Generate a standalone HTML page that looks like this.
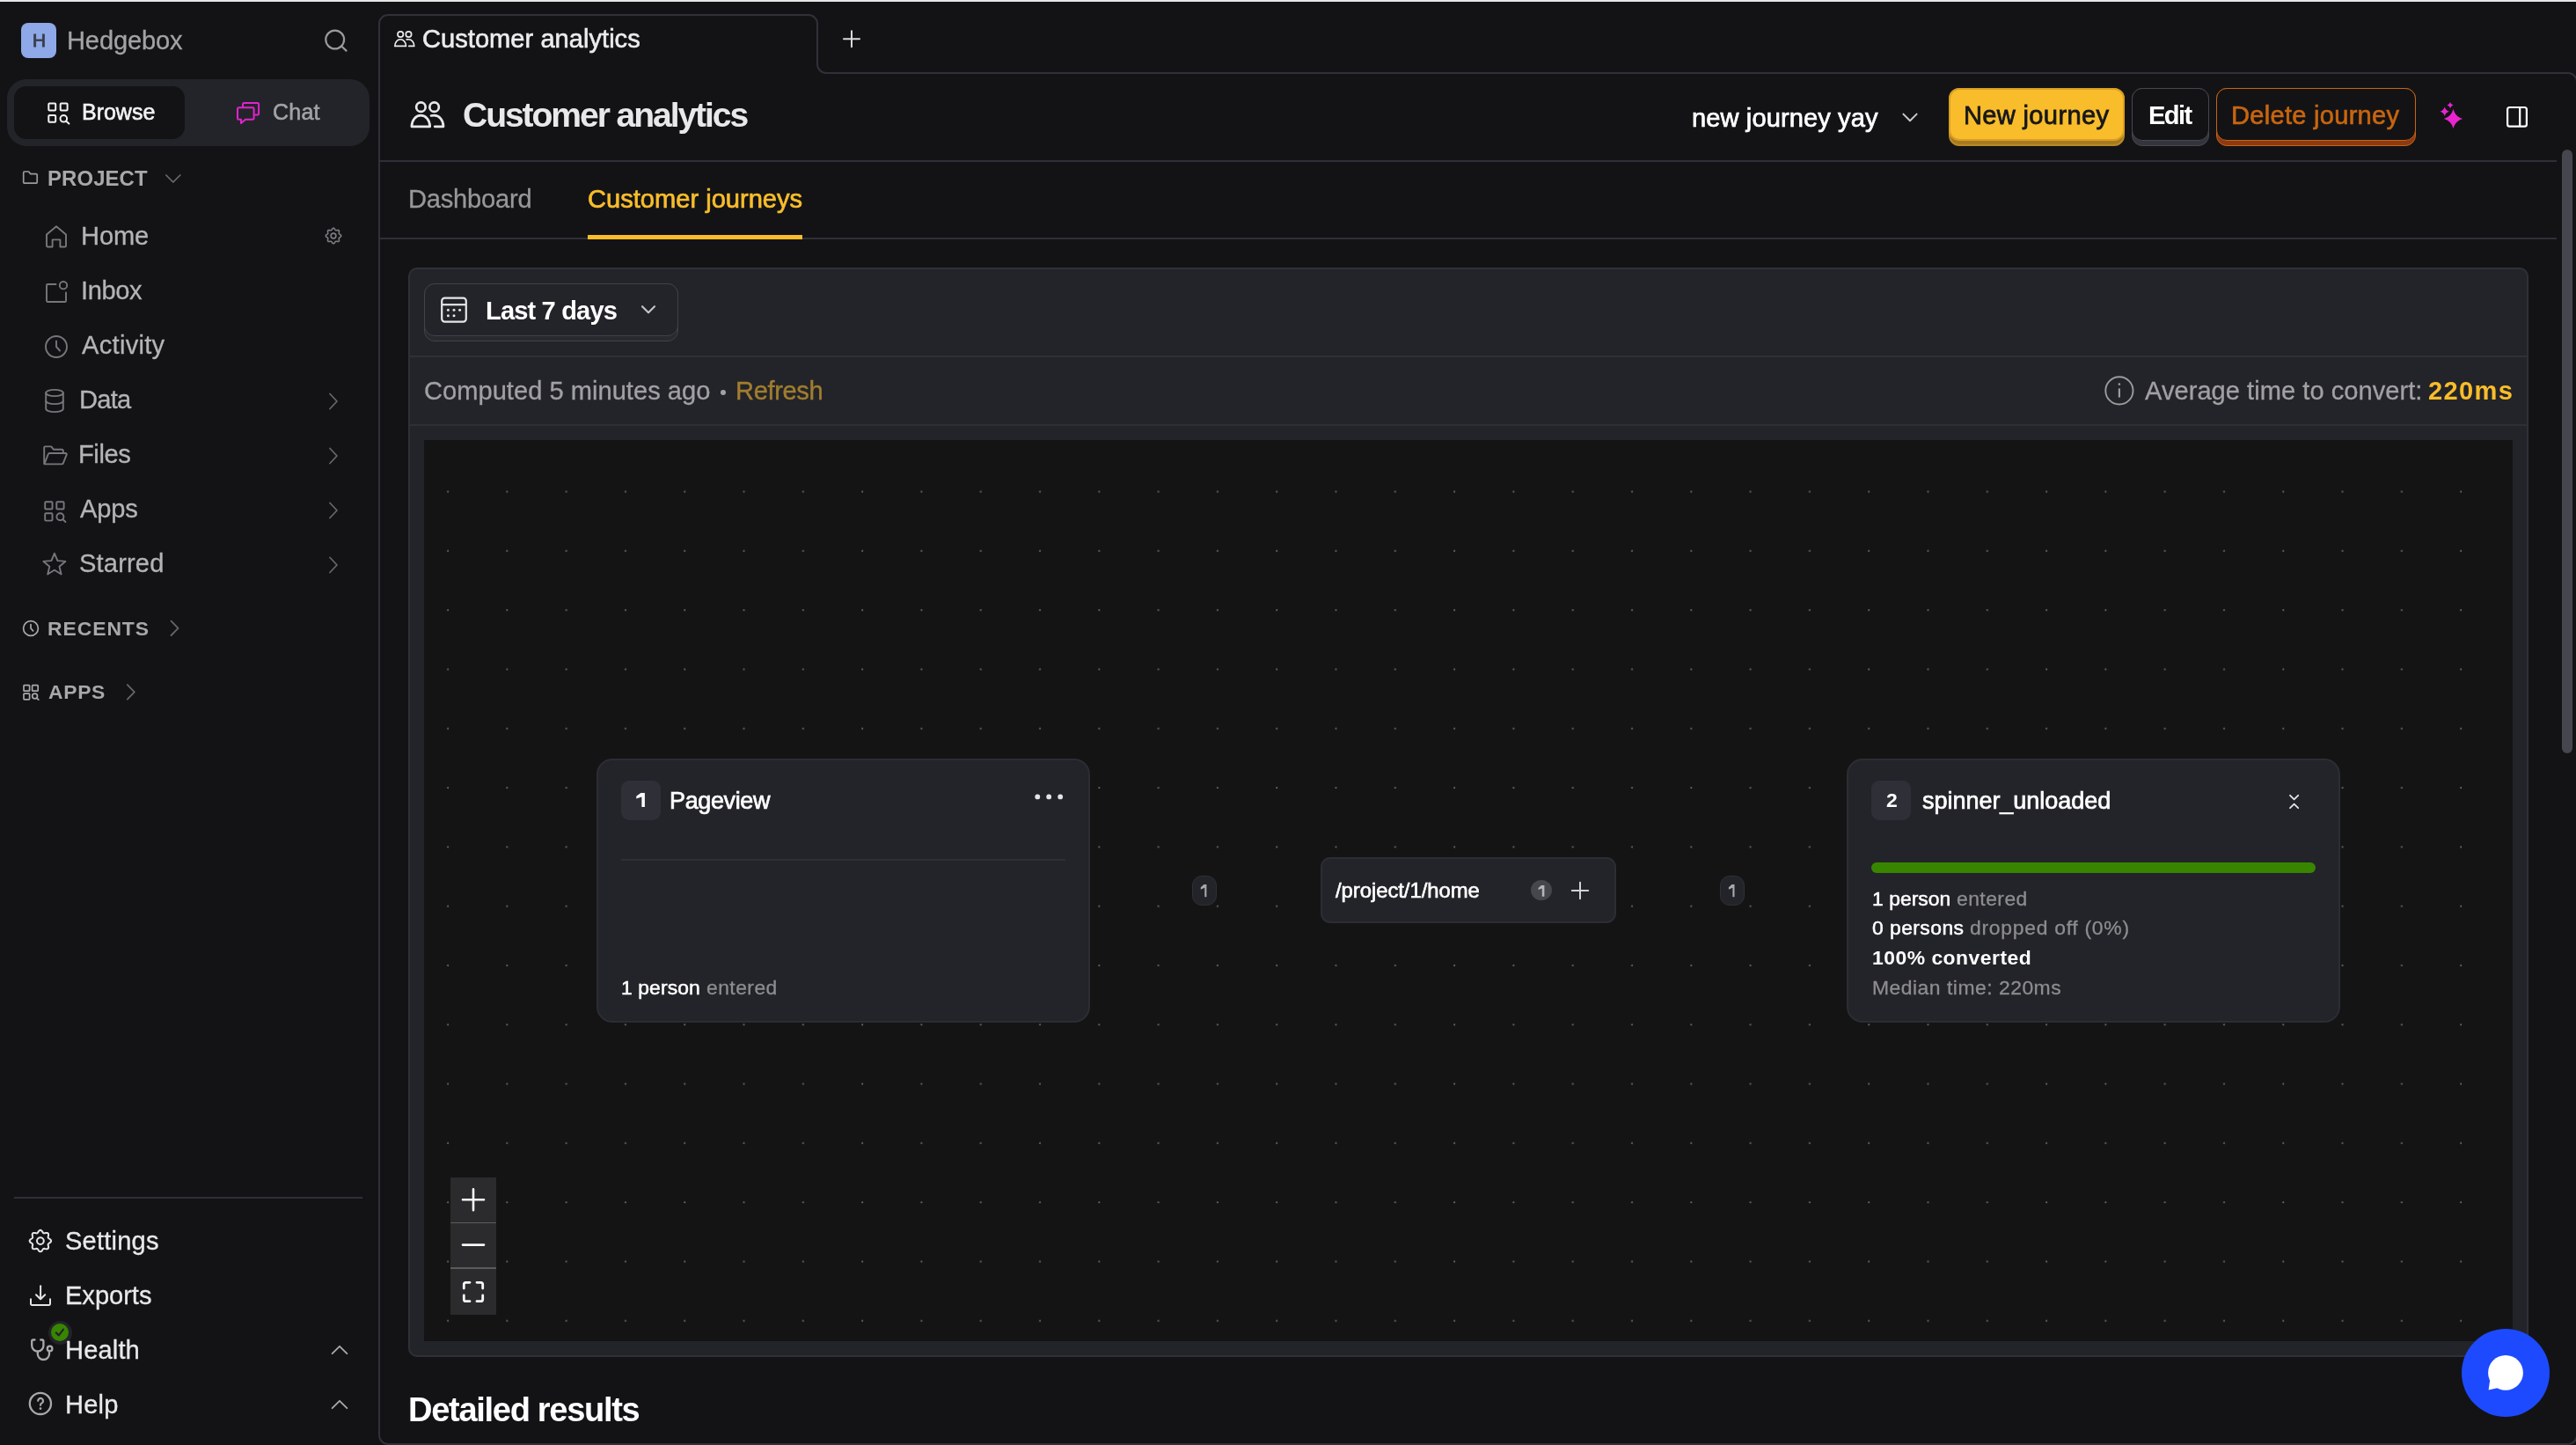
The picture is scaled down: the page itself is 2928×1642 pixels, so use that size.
<!DOCTYPE html>
<html lang="en">
<head>
<meta charset="utf-8">
<title>Customer analytics • Hedgebox</title>
<style>
*{box-sizing:border-box;margin:0;padding:0}
html,body{width:2928px;height:1642px;overflow:hidden;background:#131316}
body{position:relative;font-family:"Liberation Sans",sans-serif;color:#f2f2f3;-webkit-font-smoothing:antialiased}
.a{position:absolute}
.t{position:absolute;white-space:nowrap;line-height:1;display:block;will-change:transform}
svg{position:absolute;overflow:visible;stroke-linecap:round;stroke-linejoin:round}
.card{position:absolute;background:#232429}
svg:not([fill]){fill:none}
@media (max-width:1600px){html{zoom:.5}}
</style>
</head>
<body>
<!-- top window strip -->
<div class="a" style="left:0;top:0;width:2928px;height:2px;background:#e6e6e7"></div>

<!-- ============ SIDEBAR ============ -->
<div class="a" style="left:24px;top:26px;width:40px;height:40px;border-radius:8px;background:#8ea8e8"></div>
<svg style="left:0;top:0" width="432" height="100" viewBox="0 0 432 100" stroke="#9a9a9d" stroke-width="2.2">
  <circle cx="380.7" cy="45" r="10.4"/><path d="M388.4 52.7 L393.6 57.6"/>
</svg>
<!-- segmented control -->
<div class="a" style="left:8px;top:90px;width:412px;height:76px;border-radius:22px;background:#232429"></div>
<div class="a" style="left:16px;top:98px;width:194px;height:60px;border-radius:14px;background:#131316"></div>
<svg style="left:0;top:100px" width="432" height="60" viewBox="0 100 432 60" stroke="#f2f2f3" stroke-width="2">
  <rect x="55.3" y="117.5" width="7.9" height="7.9" rx="1"/><rect x="68.7" y="117.5" width="7.9" height="7.9" rx="1"/><rect x="55.3" y="130.9" width="7.9" height="7.9" rx="1"/>
  <circle cx="72.3" cy="134.8" r="3.8"/><path d="M75.2 137.7 L78.4 140.6"/>
</svg>
<svg style="left:0;top:100px" width="432" height="60" viewBox="0 100 432 60" stroke="#e222cf" stroke-width="2">
  <path d="M276 121 V118.4 a1.4 1.4 0 0 1 1.4 -1.4 H292.7 a1.4 1.4 0 0 1 1.4 1.4 V129.2 a1.4 1.4 0 0 1 -1.4 1.4 H290"/>
  <path d="M271.4 122.2 H287.2 a1.4 1.4 0 0 1 1.4 1.4 V134.4 a1.4 1.4 0 0 1 -1.4 1.4 H279 L274 140 V135.8 H271.4 a1.4 1.4 0 0 1 -1.4 -1.4 V123.6 a1.4 1.4 0 0 1 1.4 -1.4 Z"/>
</svg>
<!-- PROJECT header icons -->
<svg style="left:0;top:180px" width="432" height="60" viewBox="0 180 432 60" stroke="#9a9a9d" stroke-width="1.7">
  <path d="M26.7 196.2 a1.2 1.2 0 0 1 1.2 -1.2 H32.6 L34.8 197.6 H41 a1.2 1.2 0 0 1 1.2 1.2 V207 a1.2 1.2 0 0 1 -1.2 1.2 H27.9 a1.2 1.2 0 0 1 -1.2 -1.2 Z"/>
</svg>
<svg style="left:0;top:180px" width="432" height="60" viewBox="0 180 432 60" stroke="#6b6b70" stroke-width="1.7">
  <path d="M188.8 199 L196.8 207 L204.8 199"/>
</svg>
<!-- nav icons -->
<svg style="left:0;top:240px" width="432" height="440" viewBox="0 240 432 440" stroke="#77777b" stroke-width="1.9">
  <!-- home -->
  <path d="M53 266.5 L64 257.2 L75 266.5 V279.2 a1.3 1.3 0 0 1 -1.3 1.3 H68.4 V272.4 H59.6 V280.5 H54.3 a1.3 1.3 0 0 1 -1.3 -1.3 Z"/>
  <!-- inbox -->
  <path d="M63.5 323 H54.3 a1.3 1.3 0 0 0 -1.3 1.3 V341.7 a1.3 1.3 0 0 0 1.3 1.3 H73.7 a1.3 1.3 0 0 0 1.3 -1.3 V332.5"/><circle cx="72" cy="324.2" r="4.2"/>
  <!-- clock -->
  <circle cx="64" cy="394" r="12"/><path d="M64 387.5 V394 L68 398.5"/>
  <!-- data -->
  <ellipse cx="62" cy="446.5" rx="9.8" ry="3.6"/><path d="M52.2 446.5 V464.5 c0 2 4.4 3.6 9.8 3.6 s9.8 -1.6 9.8 -3.6 V446.5"/><path d="M52.2 455.5 c0 2 4.4 3.6 9.8 3.6 s9.8 -1.6 9.8 -3.6"/>
  <!-- files (open folder) -->
  <path d="M50.2 526.2 V508.7 a1.3 1.3 0 0 1 1.3 -1.3 H58.2 L61 510.8 H70.5 a1.3 1.3 0 0 1 1.3 1.3 V515"/><path d="M50.4 527.3 L54.8 516 a1.5 1.5 0 0 1 1.4 -1 H74.6 a1.2 1.2 0 0 1 1.1 1.7 L71.8 526.4 a1.5 1.5 0 0 1 -1.4 1 H51 Z"/>
  <!-- apps -->
  <rect x="51.2" y="570.2" width="8.3" height="8.3" rx="1"/><rect x="64.3" y="570.2" width="8.3" height="8.3" rx="1"/><rect x="51.2" y="583.3" width="8.3" height="8.3" rx="1"/><circle cx="68.4" cy="587.2" r="4"/><path d="M71.5 590.3 L74.4 593"/>
  <!-- star -->
  <path d="M61.9 628.8 L65.4 637.1 L74.4 637.9 L67.5 643.7 L69.6 652.5 L61.9 647.8 L54.2 652.5 L56.3 643.7 L49.4 637.9 L58.4 637.1 Z"/>
</svg>
<svg style="left:0;top:240px" width="432" height="440" viewBox="0 240 432 440" stroke="#7d7d81" stroke-width="1.6">
  <circle cx="379" cy="268" r="2.9"/>
  <path d="M379.0 259.3 L379.6 259.4 L380.1 259.8 L380.5 260.4 L380.9 261.0 L381.2 261.4 L381.6 261.7 L382.1 261.8 L382.6 261.7 L383.3 261.6 L384.0 261.5 L384.7 261.6 L385.2 261.8 L385.4 262.3 L385.5 263.0 L385.4 263.7 L385.3 264.4 L385.2 264.9 L385.3 265.4 L385.6 265.8 L386.0 266.1 L386.6 266.5 L387.2 266.9 L387.6 267.4 L387.7 268.0 L387.6 268.6 L387.2 269.1 L386.6 269.5 L386.0 269.9 L385.6 270.2 L385.3 270.6 L385.2 271.1 L385.3 271.6 L385.4 272.3 L385.5 273.0 L385.4 273.7 L385.2 274.2 L384.7 274.4 L384.0 274.5 L383.3 274.4 L382.6 274.3 L382.1 274.2 L381.6 274.3 L381.2 274.6 L380.9 275.0 L380.5 275.6 L380.1 276.2 L379.6 276.6 L379.0 276.7 L378.4 276.6 L377.9 276.2 L377.5 275.6 L377.1 275.0 L376.8 274.6 L376.4 274.3 L375.9 274.2 L375.4 274.3 L374.7 274.4 L374.0 274.5 L373.3 274.4 L372.8 274.2 L372.6 273.7 L372.5 273.0 L372.6 272.3 L372.7 271.6 L372.8 271.1 L372.7 270.6 L372.4 270.2 L372.0 269.9 L371.4 269.5 L370.8 269.1 L370.4 268.6 L370.3 268.0 L370.4 267.4 L370.8 266.9 L371.4 266.5 L372.0 266.1 L372.4 265.8 L372.7 265.4 L372.8 264.9 L372.7 264.4 L372.6 263.7 L372.5 263.0 L372.6 262.3 L372.8 261.8 L373.3 261.6 L374.0 261.5 L374.7 261.6 L375.4 261.7 L375.9 261.8 L376.4 261.7 L376.8 261.4 L377.1 261.0 L377.5 260.4 L377.9 259.8 L378.4 259.4 Z"/>
</svg>
<svg style="left:0;top:240px" width="432" height="440" viewBox="0 240 432 440" stroke="#66666b" stroke-width="1.8">
  <path d="M375 447.5 L383 456 L375 464.5"/><path d="M375 509.5 L383 518 L375 526.5"/><path d="M375 571.5 L383 580 L375 588.5"/><path d="M375 633.5 L383 642 L375 650.5"/>
</svg>
<!-- RECENTS / APPS -->
<svg style="left:0;top:690px" width="432" height="120" viewBox="0 690 432 120" stroke="#a8a8ab" stroke-width="1.7">
  <circle cx="35" cy="714" r="8.4"/><path d="M35 709.5 V714 L37.6 716.8"/>
  <rect x="27" y="778.6" width="6.6" height="6.6" rx=".8"/><rect x="36.6" y="778.6" width="6.6" height="6.6" rx=".8"/><rect x="27" y="788.2" width="6.6" height="6.6" rx=".8"/><circle cx="39.6" cy="791" r="2.9"/><path d="M41.9 793.3 L43.8 795.2"/>
</svg>
<svg style="left:0;top:690px" width="432" height="120" viewBox="0 690 432 120" stroke="#66666b" stroke-width="1.8">
  <path d="M194.5 705.6 L202.5 713.8 L194.5 722"/><path d="M144.8 778.2 L152.8 786.4 L144.8 794.6"/>
</svg>
<!-- bottom separator -->
<div class="a" style="left:16px;top:1360px;width:396px;height:2px;background:#2f3037"></div>
<!-- bottom icons -->
<svg style="left:0;top:1380px" width="432" height="262" viewBox="0 1380 432 262" stroke="#e4e4e6" stroke-width="2">
  <!-- gear -->
  <circle cx="45.9" cy="1410.1" r="3.9"/>
  <path d="M45.9 1397.8 L46.7 1398.1 L47.4 1398.6 L48.0 1399.4 L48.5 1400.2 L49.0 1400.9 L49.6 1401.3 L50.2 1401.4 L51.0 1401.2 L52.0 1401.0 L52.9 1400.9 L53.9 1401.0 L54.6 1401.4 L55.0 1402.1 L55.1 1403.1 L55.0 1404.0 L54.8 1405.0 L54.6 1405.8 L54.7 1406.4 L55.1 1407.0 L55.8 1407.5 L56.6 1408.0 L57.4 1408.6 L57.9 1409.3 L58.1 1410.1 L57.9 1410.9 L57.4 1411.6 L56.6 1412.2 L55.8 1412.7 L55.1 1413.2 L54.7 1413.8 L54.6 1414.4 L54.8 1415.2 L55.0 1416.2 L55.1 1417.1 L55.0 1418.1 L54.6 1418.8 L53.9 1419.2 L52.9 1419.3 L52.0 1419.2 L51.0 1419.0 L50.2 1418.8 L49.6 1418.9 L49.0 1419.3 L48.5 1420.0 L48.0 1420.8 L47.4 1421.6 L46.7 1422.1 L45.9 1422.3 L45.1 1422.1 L44.4 1421.6 L43.8 1420.8 L43.3 1420.0 L42.8 1419.3 L42.2 1418.9 L41.6 1418.8 L40.8 1419.0 L39.8 1419.2 L38.9 1419.3 L37.9 1419.2 L37.2 1418.8 L36.8 1418.1 L36.7 1417.1 L36.8 1416.2 L37.0 1415.2 L37.2 1414.4 L37.1 1413.8 L36.7 1413.2 L36.0 1412.7 L35.2 1412.2 L34.4 1411.6 L33.9 1410.9 L33.6 1410.1 L33.9 1409.3 L34.4 1408.6 L35.2 1408.0 L36.0 1407.5 L36.7 1407.0 L37.1 1406.4 L37.2 1405.8 L37.0 1405.0 L36.8 1404.0 L36.7 1403.1 L36.8 1402.1 L37.2 1401.4 L37.9 1401.0 L38.9 1400.9 L39.8 1401.0 L40.8 1401.2 L41.6 1401.4 L42.2 1401.3 L42.8 1400.9 L43.3 1400.2 L43.8 1399.4 L44.4 1398.6 L45.1 1398.1 Z"/>
  <!-- export -->
  <path d="M46.1 1461.2 V1476"/><path d="M41 1471.2 L46.1 1476.3 L51.2 1471.2"/><path d="M35 1476.2 V1481.6 a1.3 1.3 0 0 0 1.3 1.3 H55.7 a1.3 1.3 0 0 0 1.3 -1.3 V1476.2"/>
</svg>
<svg style="left:0;top:1380px" width="432" height="262" viewBox="0 1380 432 262" stroke="#a9a9ac" stroke-width="2.3">
  <!-- stethoscope -->
  <path d="M39.5 1522.5 H37.5 a1.3 1.3 0 0 0 -1.3 1.3 V1529 a6.6 6.6 0 0 0 13.2 0 V1523.8 a1.3 1.3 0 0 0 -1.3 -1.3 H46.2"/>
  <path d="M42.8 1535.6 V1538.4 a6.6 6.6 0 0 0 13.2 0 V1535.4"/><circle cx="56.6" cy="1532.4" r="2.8"/>
  <!-- help -->
  <circle cx="45.9" cy="1594.9" r="12.1"/>
  <path d="M43.2 1591.8 a2.9 2.9 0 1 1 4.3 2.6 c-1 .55 -1.5 1.1 -1.5 2.1 V1596.8" stroke-width="2.2"/><circle cx="46" cy="1600.6" r=".8" fill="#a9a9ac" stroke-width="1.2"/>
  <!-- chevrons up -->
  <path d="M377.6 1538.2 L386 1529.8 L394.4 1538.2" stroke-width="1.8"/><path d="M377.6 1600.2 L386 1591.8 L394.4 1600.2" stroke-width="1.8"/>
</svg>
<!-- health badge -->
<div class="a" style="left:54.5px;top:1500.5px;width:27px;height:27px;border-radius:50%;background:#232429"></div>
<div class="a" style="left:57.8px;top:1503.8px;width:20.4px;height:20.4px;border-radius:50%;background:#388600"></div>
<svg style="left:57.8px;top:1503.8px" width="20.4" height="20.4" viewBox="0 0 20.4 20.4" stroke="#232429" stroke-width="2.2"><path d="M5.8 10.4 L8.8 13.4 L14 6.6"/></svg>

<!-- ============ MAIN PANEL FRAME ============ -->
<svg style="left:0;top:0" width="2928" height="1642" viewBox="0 0 2928 1642" stroke="#303139" stroke-width="2" stroke-linecap="butt">
  <path d="M441 1641 a10 10 0 0 1 -10 -10 V27 a10 10 0 0 1 10 -10 H919 a10 10 0 0 1 10 10 V73 a10 10 0 0 0 10 10 H2919 a10 10 0 0 1 10 10 V1631 a10 10 0 0 1 -10 10 Z"/>
</svg>
<!-- tab icon + plus -->
<svg style="left:440px;top:30px" width="40" height="30" viewBox="440 30 40 30" stroke="#ececed" stroke-width="2.8">
  <g transform="translate(448 35) scale(0.607) translate(-466.5 -115.1)"><circle cx="478.4" cy="121.7" r="5.25"/><circle cx="493.6" cy="121.7" r="5.25"/>
  <path d="M467.9 143.8 C467.9 136.6 472.5 131.2 478.3 131.2 C484.1 131.2 488.7 136.6 488.7 143.8 Z"/><path d="M490 131.5 Q491.6 131.2 493.6 131.2 C499.4 131.2 504 136.6 504 143.8 H494.2"/></g>
</svg>
<svg style="left:950px;top:30px" width="40" height="30" viewBox="950 30 40 30" stroke="#d9d9db" stroke-width="2" stroke-linecap="butt">
  <path d="M959 44.2 H977 M968 35.2 V53.2"/>
</svg>
<!-- title icon -->
<svg style="left:460px;top:110px" width="60" height="40" viewBox="460 110 60 40" stroke="#e8e8ea" stroke-width="2.7">
  <circle cx="478.4" cy="121.7" r="5.25"/><circle cx="493.6" cy="121.7" r="5.25"/>
  <path d="M467.9 143.8 C467.9 136.6 472.5 131.2 478.3 131.2 C484.1 131.2 488.7 136.6 488.7 143.8 Z"/><path d="M490 131.5 Q491.6 131.2 493.6 131.2 C499.4 131.2 504 136.6 504 143.8 H494.2"/>
</svg>
<!-- header lines -->
<div class="a" style="left:432px;top:182px;width:2474px;height:2px;background:#2f3037"></div>
<div class="a" style="left:432px;top:270px;width:2474px;height:2px;background:#2f3037"></div>
<div class="a" style="left:668px;top:267px;width:244px;height:5px;background:#f9bd2b"></div>
<!-- header right -->
<svg style="left:2150px;top:120px" width="40" height="30" viewBox="2150 120 40 30" stroke="#c9c9cc" stroke-width="2">
  <path d="M2163.4 129.6 L2171 137.2 L2178.6 129.6"/>
</svg>
<div class="a" style="left:2215px;top:100px;width:200px;height:66px;border-radius:12px;background:#a67a22;border:2px solid #b98a24"></div>
<div class="a" style="left:2215px;top:100px;width:200px;height:60px;border-radius:12px;background:#f9bd2b;border:2px solid #d99f23"></div>
<div class="a" style="left:2423px;top:100px;width:88px;height:66px;border-radius:12px;background:#34353c;border:1.7px solid #46474f"></div>
<div class="a" style="left:2423px;top:100px;width:88px;height:60px;border-radius:12px;background:#131316;border:1.7px solid #46474f"></div>
<div class="a" style="left:2519px;top:100px;width:227px;height:66px;border-radius:12px;background:#8c3a14;border:1.8px solid #c8640f"></div>
<div class="a" style="left:2519px;top:100px;width:227px;height:60px;border-radius:12px;background:#131316;border:1.8px solid #c8640f"></div>
<svg style="left:2770px;top:112px" width="34" height="38" viewBox="2770 112 34 38" fill="#e925cf" stroke="none">
  <path d="M2788.5 124 Q2790.8 132.7 2799.2 135 Q2790.8 137.3 2788.5 146 Q2786.2 137.3 2777.8 135 Q2786.2 132.7 2788.5 124 Z"/>
  <path d="M2778.7 121.6 Q2779.7999999999997 125.7 2783.8999999999996 126.8 Q2779.7999999999997 127.89999999999999 2778.7 132.0 Q2777.6 127.89999999999999 2773.5 126.8 Q2777.6 125.7 2778.7 121.6 Z"/>
  <path d="M2785 116.0 Q2785.7 118.8 2788.5 119.5 Q2785.7 120.2 2785 123.0 Q2784.3 120.2 2781.5 119.5 Q2784.3 118.8 2785 116.0 Z"/>
</svg>
<svg style="left:2840px;top:112px" width="40" height="40" viewBox="2840 112 40 40" stroke="#ffffff" stroke-width="2.2">
  <rect x="2850.1" y="122" width="21.8" height="21.6" rx="2.4"/><path d="M2864.2 122 V143.6" stroke-linecap="butt"/>
</svg>
<!-- scrollbar thumb -->
<div class="a" style="left:2912px;top:170px;width:12px;height:686px;border-radius:6px;background:#46474e"></div>

<!-- ============ INSIGHT CARD ============ -->
<div class="a" style="left:464px;top:304px;width:2410px;height:1238px;border-radius:10px;background:#232429;border:2px solid #2f3037"></div>
<div class="a" style="left:466px;top:404px;width:2406px;height:2px;background:#2f3037"></div>
<div class="a" style="left:466px;top:482px;width:2406px;height:2px;background:#2f3037"></div>
<!-- date button -->
<div class="a" style="left:482px;top:322px;width:289px;height:66px;border-radius:12px;background:#292a30;border:1.6px solid #41424a"></div>
<div class="a" style="left:482px;top:322px;width:289px;height:60px;border-radius:12px;background:#232429;border:1.6px solid #41424a"></div>
<svg style="left:495px;top:330px" width="44" height="44" viewBox="495 330 44 44" stroke="#e6e6e8" stroke-width="2.2">
  <rect x="502.2" y="338.6" width="27.6" height="27" rx="3.4"/><path d="M502.6 346.2 H529.4" stroke-linecap="butt"/>
</svg>
<svg style="left:495px;top:330px" width="44" height="44" viewBox="495 330 44 44" fill="#e6e6e8" stroke="none">
  <circle cx="509.4" cy="352.2" r="1.5"/><circle cx="516" cy="352.2" r="1.5"/><circle cx="522.6" cy="352.2" r="1.5"/><circle cx="509.4" cy="358.8" r="1.5"/><circle cx="516" cy="358.8" r="1.5"/>
</svg>
<svg style="left:720px;top:338px" width="34" height="28" viewBox="720 338 34 28" stroke="#c6c6c9" stroke-width="2.1">
  <path d="M730 348.2 L737 355.2 L744 348.2"/>
</svg>
<!-- computed row -->
<div class="a" style="left:819px;top:443.4px;width:6px;height:6px;border-radius:50%;background:#a1a1a4"></div>
<svg style="left:2388px;top:424px" width="42" height="42" viewBox="2388 424 42 42" stroke="#9c9c9f" stroke-width="1.9">
  <circle cx="2408.9" cy="443.9" r="15.6"/><path d="M2408.9 441.4 V451.6" stroke-linecap="butt" stroke-width="2.2"/><circle cx="2408.9" cy="436.6" r="1.3" fill="#9c9c9f" stroke="none"/>
</svg>

<!-- canvas -->
<div class="a" id="canvas" style="left:482px;top:500px;width:2374px;height:1024px;background-color:#141414;background-image:radial-gradient(circle at 1.25px 1.25px,#606060 0,#606060 0.8px,rgba(96,96,96,0) 1.35px);background-size:67.3px 67.3px;background-position:25.95px 57.55px;overflow:hidden"></div>

<!-- node 1 -->
<div class="a" style="left:678px;top:862px;width:561px;height:300px;border-radius:18px;background:#232429;border:2px solid #2c2d34"></div>
<div class="a" style="left:706px;top:887px;width:45px;height:45px;border-radius:9px;background:#2e2f37"></div>
<div class="a" style="left:706px;top:976px;width:505px;height:2px;background:#2f3037"></div>
<svg style="left:1170px;top:895px" width="50" height="20" viewBox="1170 895 50 20" fill="#e4e4e6" stroke="none">
  <circle cx="1179.3" cy="905.4" r="2.9"/><circle cx="1192.2" cy="905.4" r="2.9"/><circle cx="1205.2" cy="905.4" r="2.9"/>
</svg>
<!-- edge label 1 -->
<div class="a" style="left:1355px;top:995px;width:28px;height:34px;border-radius:11px;background:#232429;border:1.6px solid #2f3037"></div>
<!-- middle node -->
<div class="a" style="left:1501px;top:974px;width:336px;height:75px;border-radius:11px;background:#232429;border:2px solid #2c2d34"></div>
<div class="a" style="left:1740.2px;top:1000.4px;width:24px;height:23px;border-radius:50%;background:#46474c"></div>
<svg style="left:1780px;top:996px" width="32" height="32" viewBox="1780 996 32 32" stroke="#d2d2d5" stroke-width="2" stroke-linecap="butt">
  <path d="M1786.8 1012 H1805.2 M1796 1002.8 V1021.2"/>
</svg>
<!-- edge label 2 -->
<div class="a" style="left:1955.2px;top:995px;width:28px;height:34px;border-radius:11px;background:#232429;border:1.6px solid #2f3037"></div>
<!-- node 2 -->
<div class="a" style="left:2099px;top:862px;width:561px;height:300px;border-radius:18px;background:#232429;border:2px solid #2c2d34"></div>
<div class="a" style="left:2127px;top:887px;width:45px;height:45px;border-radius:9px;background:#2e2f37"></div>
<div class="a" style="left:2127px;top:980px;width:505px;height:12px;border-radius:6px;background:#388600"></div>
<svg style="left:2595px;top:895px" width="26" height="32" viewBox="2595 895 26 32" stroke="#e4e4e6" stroke-width="1.8">
  <path d="M2603 903.8 L2607.6 908.4 L2612.2 903.8"/><path d="M2603 918.2 L2607.6 913.6 L2612.2 918.2"/>
</svg>
<!-- zoom controls -->
<div class="a" style="left:512px;top:1338px;width:52px;height:156px;background:#2b2b2d"></div>
<div class="a" style="left:512px;top:1388.6px;width:52px;height:1.6px;background:#5b5b5b"></div>
<div class="a" style="left:512px;top:1440.4px;width:52px;height:1.6px;background:#5b5b5b"></div>
<svg style="left:512px;top:1338px" width="52" height="156" viewBox="512 1338 52 156" stroke="#f8f8f8" stroke-width="2.6" stroke-linecap="butt">
  <path d="M526 1363.2 H550 M538 1351.2 V1375.2"/>
  <path d="M526 1414.6 H550"/>
  <path d="M527.3 1464 V1459.6 a2.3 2.3 0 0 1 2.3 -2.3 H534 M542 1457.3 H546.4 a2.3 2.3 0 0 1 2.3 2.3 V1464 M548.7 1472 V1476.4 a2.3 2.3 0 0 1 -2.3 2.3 H542 M534 1478.7 H529.6 a2.3 2.3 0 0 1 -2.3 -2.3 V1472" stroke-width="2.8"/>
</svg>

<!-- floating chat button -->
<div class="a" style="left:2798px;top:1510px;width:100px;height:100px;border-radius:50%;background:#1d4aff"></div>
<svg style="left:2798px;top:1510px" width="100" height="100" viewBox="2798 1510 100 100" fill="#ffffff" stroke="none">
  <circle cx="2848" cy="1559.9" r="19.9"/><path d="M2830.5 1566 L2828.6 1579.4 L2842 1576.6 Z"/>
</svg>

<!-- glyph-like "1" marks (Inter-style, no foot) -->
<svg style="left:1362px;top:1003px" width="12" height="20" viewBox="1362 1003 12 20" fill="#a9a9ac" stroke="none"><path d="M1371.40 1005.00 L1371.40 1019.20 L1369.30 1019.20 L1369.30 1008.72 L1364.80 1010.68 L1364.80 1008.27 L1368.45 1005.00 Z"/></svg>
<svg style="left:1962px;top:1003px" width="12" height="20" viewBox="1962 1003 12 20" fill="#a9a9ac" stroke="none"><path d="M1971.50 1005.00 L1971.50 1019.20 L1969.40 1019.20 L1969.40 1008.72 L1964.90 1010.68 L1964.90 1008.27 L1968.55 1005.00 Z"/></svg>
<svg style="left:721px;top:899px" width="15" height="22" viewBox="721 899 15 22" fill="#ffffff" stroke="none"><path d="M732.90 901.00 L732.90 917.00 L729.40 917.00 L729.40 905.59 L723.30 907.40 L723.30 904.68 L728.44 901.00 Z"/></svg>
<svg style="left:1746px;top:1004px" width="12" height="18" viewBox="1746 1004 12 18" fill="#b6b6b9" stroke="none"><path d="M1755.40 1006.00 L1755.40 1018.70 L1752.80 1018.70 L1752.80 1009.58 L1748.60 1011.08 L1748.60 1008.92 L1752.04 1006.00 Z"/></svg>
<span class="t" style="left:37.20px;top:36.00px;font-size:20.8px;font-weight:normal;color:#3a3d4a;letter-spacing:0.000px;-webkit-text-stroke:0.9px #3a3d4a;">H</span>
<span class="t" style="left:75.90px;top:32.00px;font-size:29.1px;font-weight:normal;color:#a3a3a6;letter-spacing:-0.156px;-webkit-text-stroke:0.3px #a3a3a6;">Hedgebox</span>
<span class="t" style="left:93.20px;top:115.00px;font-size:25.0px;font-weight:normal;color:#f2f2f3;letter-spacing:-0.012px;-webkit-text-stroke:0.6px #f2f2f3;">Browse</span>
<span class="t" style="left:309.80px;top:115.00px;font-size:25.0px;font-weight:normal;color:#a3a3a6;letter-spacing:0.213px;-webkit-text-stroke:0.6px #a3a3a6;">Chat</span>
<span class="t" style="left:53.80px;top:191.00px;font-size:23.9px;font-weight:bold;color:#a8a8ab;letter-spacing:0.126px;">PROJECT</span>
<span class="t" style="left:91.60px;top:254.00px;font-size:29.1px;font-weight:normal;color:#b4b4b7;letter-spacing:-0.109px;-webkit-text-stroke:0.3px #b4b4b7;">Home</span>
<span class="t" style="left:91.60px;top:316.00px;font-size:29.1px;font-weight:normal;color:#b4b4b7;letter-spacing:-0.431px;-webkit-text-stroke:0.3px #b4b4b7;">Inbox</span>
<span class="t" style="left:93.00px;top:378.00px;font-size:29.1px;font-weight:normal;color:#b4b4b7;letter-spacing:0.287px;-webkit-text-stroke:0.3px #b4b4b7;">Activity</span>
<span class="t" style="left:90.00px;top:440.00px;font-size:29.1px;font-weight:normal;color:#b4b4b7;letter-spacing:-0.758px;-webkit-text-stroke:0.3px #b4b4b7;">Data</span>
<span class="t" style="left:89.00px;top:502.00px;font-size:29.1px;font-weight:normal;color:#b4b4b7;letter-spacing:-0.420px;-webkit-text-stroke:0.3px #b4b4b7;">Files</span>
<span class="t" style="left:91.00px;top:564.00px;font-size:29.1px;font-weight:normal;color:#b4b4b7;letter-spacing:-0.189px;-webkit-text-stroke:0.3px #b4b4b7;">Apps</span>
<span class="t" style="left:90.00px;top:626.00px;font-size:29.1px;font-weight:normal;color:#b4b4b7;letter-spacing:0.162px;-webkit-text-stroke:0.3px #b4b4b7;">Starred</span>
<span class="t" style="left:53.50px;top:703.00px;font-size:22.9px;font-weight:bold;color:#a8a8ab;letter-spacing:0.948px;">RECENTS</span>
<span class="t" style="left:54.50px;top:775.00px;font-size:22.9px;font-weight:bold;color:#a8a8ab;letter-spacing:0.678px;">APPS</span>
<span class="t" style="left:74.10px;top:1396.00px;font-size:29.1px;font-weight:normal;color:#e9e9ea;letter-spacing:0.189px;-webkit-text-stroke:0.3px #e9e9ea;">Settings</span>
<span class="t" style="left:73.70px;top:1458.00px;font-size:29.1px;font-weight:normal;color:#e9e9ea;letter-spacing:-0.031px;-webkit-text-stroke:0.3px #e9e9ea;">Exports</span>
<span class="t" style="left:73.60px;top:1520.00px;font-size:29.1px;font-weight:normal;color:#e9e9ea;letter-spacing:0.136px;-webkit-text-stroke:0.3px #e9e9ea;">Health</span>
<span class="t" style="left:73.60px;top:1582.00px;font-size:29.1px;font-weight:normal;color:#e9e9ea;letter-spacing:0.215px;-webkit-text-stroke:0.3px #e9e9ea;">Help</span>
<span class="t" style="left:480.00px;top:30.00px;font-size:29.1px;font-weight:normal;color:#ececed;letter-spacing:0.021px;-webkit-text-stroke:0.6px #ececed;">Customer analytics</span>
<span class="t" style="left:526.40px;top:111.00px;font-size:39.1px;font-weight:bold;color:#e8e8ea;letter-spacing:-2.076px;">Customer analytics</span>
<span class="t" style="left:463.80px;top:212.00px;font-size:29.1px;font-weight:normal;color:#97979a;letter-spacing:-0.206px;-webkit-text-stroke:0.3px #97979a;">Dashboard</span>
<span class="t" style="left:668.40px;top:212.00px;font-size:29.1px;font-weight:normal;color:#f9bd2b;letter-spacing:-0.001px;-webkit-text-stroke:0.7px #f9bd2b;">Customer journeys</span>
<span class="t" style="left:1923.00px;top:120.00px;font-size:29.1px;font-weight:normal;color:#ffffff;letter-spacing:0.094px;-webkit-text-stroke:0.7px #ffffff;">new journey yay</span>
<span class="t" style="left:2231.50px;top:117.00px;font-size:29.1px;font-weight:normal;color:#17171a;letter-spacing:0.324px;-webkit-text-stroke:0.8px #17171a;">New journey</span>
<span class="t" style="left:2441.70px;top:117.00px;font-size:29.1px;font-weight:bold;color:#ffffff;letter-spacing:-1.553px;">Edit</span>
<span class="t" style="left:2536.00px;top:117.00px;font-size:29.1px;font-weight:normal;color:#c9660f;letter-spacing:0.265px;-webkit-text-stroke:0.6px #c9660f;">Delete journey</span>
<span class="t" style="left:551.90px;top:339.00px;font-size:29.1px;font-weight:bold;color:#ffffff;letter-spacing:-0.860px;">Last 7 days</span>
<span class="t" style="left:482.40px;top:430.00px;font-size:29.1px;font-weight:normal;color:#a1a1a4;letter-spacing:0.015px;-webkit-text-stroke:0.3px #a1a1a4;">Computed 5 minutes ago</span>
<span class="t" style="left:836.20px;top:430.00px;font-size:29.1px;font-weight:normal;color:#a07d2f;letter-spacing:-0.382px;-webkit-text-stroke:0.4px #a07d2f;">Refresh</span>
<span class="t" style="left:2438.00px;top:430.00px;font-size:29.1px;font-weight:normal;color:#a1a1a4;letter-spacing:0.025px;-webkit-text-stroke:0.3px #a1a1a4;">Average time to convert:</span>
<span class="t" style="left:2760.30px;top:430.00px;font-size:29.1px;font-weight:bold;color:#f9bd2b;letter-spacing:1.322px;">220ms</span>
<span class="t" style="left:761.30px;top:897.00px;font-size:27.0px;font-weight:normal;color:#ffffff;letter-spacing:-0.367px;-webkit-text-stroke:0.7px #ffffff;">Pageview</span>
<span class="t" style="left:705.60px;top:1111.00px;font-size:22.9px;font-weight:normal;color:#ffffff;letter-spacing:0.093px;-webkit-text-stroke:0.5px #ffffff;">1 person</span>
<span class="t" style="left:802.80px;top:1111.00px;font-size:22.9px;font-weight:normal;color:#8d8d90;letter-spacing:0.449px;-webkit-text-stroke:0.3px #8d8d90;">entered</span>
<span class="t" style="left:1518.00px;top:1000.00px;font-size:23.9px;font-weight:normal;color:#ffffff;letter-spacing:-0.063px;-webkit-text-stroke:0.6px #ffffff;">/project/1/home</span>
<span class="t" style="left:2143.60px;top:898.00px;font-size:22.9px;font-weight:bold;color:#ffffff;letter-spacing:0.000px;">2</span>
<span class="t" style="left:2184.50px;top:897.00px;font-size:27.0px;font-weight:normal;color:#ffffff;letter-spacing:-0.031px;-webkit-text-stroke:0.7px #ffffff;">spinner_unloaded</span>
<span class="t" style="left:2127.50px;top:1010.00px;font-size:22.9px;font-weight:normal;color:#ffffff;letter-spacing:0.021px;-webkit-text-stroke:0.5px #ffffff;">1 person</span>
<span class="t" style="left:2223.80px;top:1010.00px;font-size:22.9px;font-weight:normal;color:#8d8d90;letter-spacing:0.449px;-webkit-text-stroke:0.3px #8d8d90;">entered</span>
<span class="t" style="left:2127.80px;top:1043.00px;font-size:22.9px;font-weight:normal;color:#ffffff;letter-spacing:0.440px;-webkit-text-stroke:0.5px #ffffff;">0 persons</span>
<span class="t" style="left:2239.10px;top:1043.00px;font-size:22.9px;font-weight:normal;color:#8d8d90;letter-spacing:0.729px;-webkit-text-stroke:0.3px #8d8d90;">dropped off (0%)</span>
<span class="t" style="left:2127.50px;top:1077.00px;font-size:22.9px;font-weight:bold;color:#ffffff;letter-spacing:0.498px;">100% converted</span>
<span class="t" style="left:2127.50px;top:1111.00px;font-size:22.9px;font-weight:normal;color:#8d8d90;letter-spacing:0.502px;-webkit-text-stroke:0.3px #8d8d90;">Median time: 220ms</span>
<span class="t" style="left:464.10px;top:1583.00px;font-size:38.1px;font-weight:bold;color:#ffffff;letter-spacing:-1.320px;">Detailed results</span>
</body>
</html>
